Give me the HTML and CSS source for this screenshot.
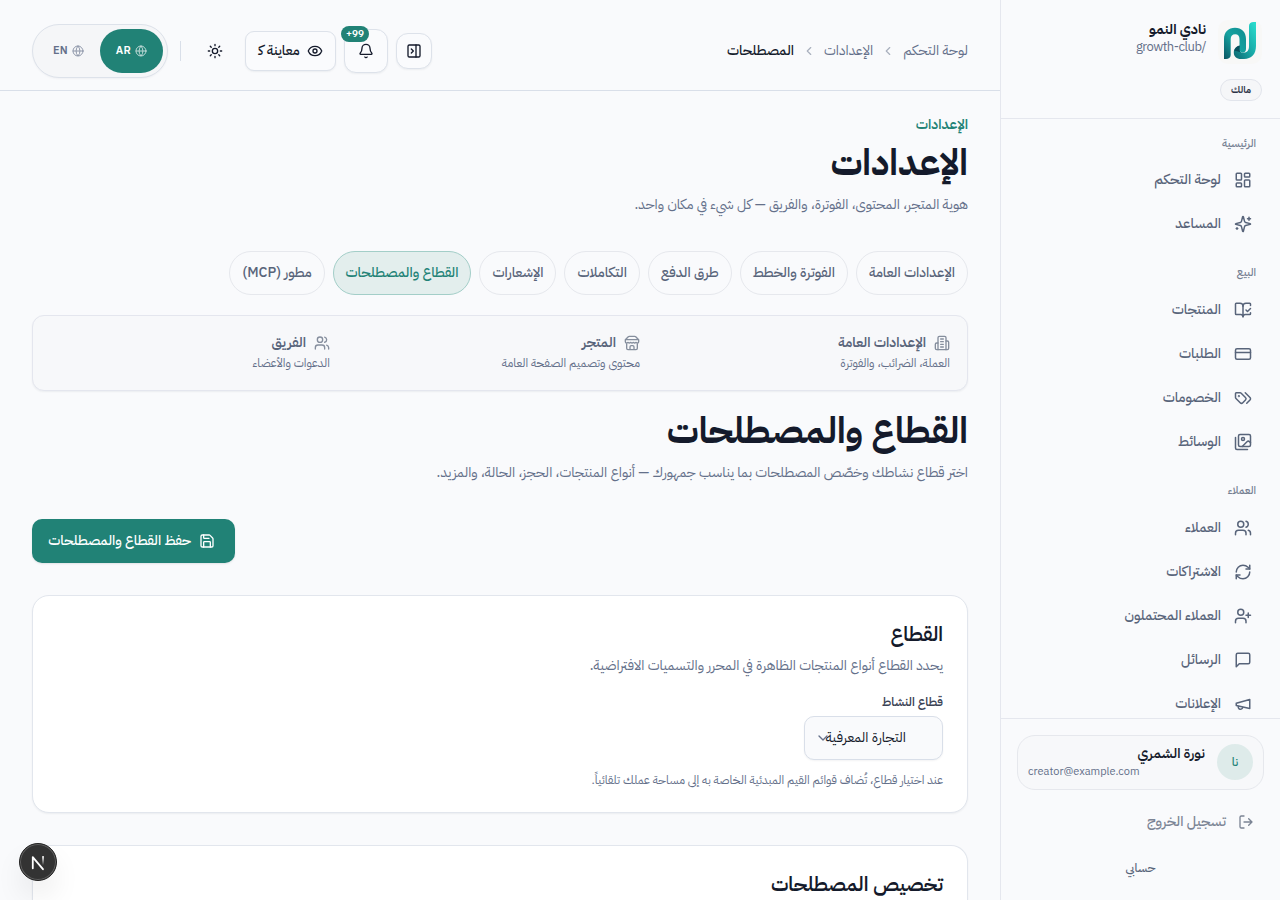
FILE: index.html
```html
<!DOCTYPE html>
<html lang="ar" dir="rtl">
<head>
  <meta charset="UTF-8">
  <meta name="viewport" content="width=device-width, initial-scale=1.0">
  <title>القطاع والمصطلحات</title>
  <link rel="stylesheet" href="styles.css">
</head>
<body>
  <aside class="sidebar">
    <div class="brand">
      <div class="brand-row">
        <svg class="logo" viewBox="0 0 44 44" fill="none">
          <defs>
            <linearGradient id="g1" x1="0" y1="1" x2="1" y2="0">
              <stop offset="0" stop-color="#0b5563"/><stop offset=".5" stop-color="#15a3a0"/><stop offset="1" stop-color="#128c90"/>
            </linearGradient>
            <linearGradient id="g2" x1="0" y1="1" x2="1" y2="0">
              <stop offset="0" stop-color="#0d6670"/><stop offset=".5" stop-color="#19aaa8"/><stop offset="1" stop-color="#2be0d0"/>
            </linearGradient>
          </defs>
          <rect width="44" height="44" rx="10" fill="#f8f8f7"/>
          <path d="M31 6C31 3.500 33 2 35.500 2H38V26C38 34 33.500 39 26 39H23C18.500 39 15.800 36.500 15.800 32.500S18.500 26 22 25.700V30C22 32 23 32.500 24.500 32.500H26C29.500 32.500 31 30 31 26Z" fill="url(#g2)"/>
          <path d="M6 39V19C6 12 10.500 7.800 17 7.800S28 12 28 19V29C28 31.500 26.500 32.500 24.500 32.500C22.500 32.500 21.500 31 21.500 29V19C21.500 16 20 14.300 17.200 14.300S12.700 16 12.700 19V35C12.700 37.500 10.500 39 8 39Z" fill="url(#g1)"/>
          <path d="M21.800 25.600C19 26 17 28 16.300 30.500L22.500 32.200C21.600 31.400 21.500 30 21.500 29Z" fill="#0a4f5c"/>
        </svg>
        <div class="brand-text">
          <b>نادي النمو</b>
          <span>/growth-club</span>
        </div>
      </div>
      <span class="role">مالك</span>
    </div>

    <nav class="nav">
      <h6>الرئيسية</h6>
      <a><svg viewBox="0 0 24 24"><rect x="3" y="3" width="7" height="9" rx="1"/><rect x="14" y="3" width="7" height="5" rx="1"/><rect x="14" y="12" width="7" height="9" rx="1"/><rect x="3" y="16" width="7" height="5" rx="1"/></svg><span>لوحة التحكم</span></a>
      <a><svg viewBox="0 0 24 24"><path d="M9.937 15.500A2 2 0 0 0 8.500 14.063l-6.135-1.582a.5.5 0 0 1 0-.962L8.500 9.936A2 2 0 0 0 9.937 8.500l1.582-6.135a.5.5 0 0 1 .963 0L14.063 8.500A2 2 0 0 0 15.500 9.937l6.135 1.581a.5.5 0 0 1 0 .964L15.500 14.063a2 2 0 0 0-1.437 1.437l-1.582 6.135a.5.5 0 0 1-.963 0z"/><path d="M20 3v4M22 5h-4M4 17v2M5 18H3"/></svg><span>المساعد</span></a>
      <h6>البيع</h6>
      <a><svg viewBox="0 0 24 24"><path d="M12 21V7M16 12l2 2 4-4"/><path d="M22 6V4a1 1 0 0 0-1-1h-5a4 4 0 0 0-4 4 4 4 0 0 0-4-4H3a1 1 0 0 0-1 1v13a1 1 0 0 0 1 1h6a3 3 0 0 1 3 3 3 3 0 0 1 3-3h6a1 1 0 0 0 1-1v-1.300"/></svg><span>المنتجات</span></a>
      <a><svg viewBox="0 0 24 24"><rect x="2" y="5" width="20" height="14" rx="2"/><path d="M2 10h20"/></svg><span>الطلبات</span></a>
      <a><svg viewBox="0 0 24 24"><path d="m15 5 6.300 6.300a2.400 2.400 0 0 1 0 3.400L17 19"/><path d="M9.586 5.586A2 2 0 0 0 8.172 5H3a1 1 0 0 0-1 1v5.172a2 2 0 0 0 .586 1.414L8.290 18.290a2.426 2.426 0 0 0 3.420 0l3.580-3.580a2.426 2.426 0 0 0 0-3.420z"/><circle cx="6.500" cy="9.500" r=".5"/></svg><span>الخصومات</span></a>
      <a><svg viewBox="0 0 24 24"><path d="M18 22H4a2 2 0 0 1-2-2V6"/><path d="m22 13-1.296-1.296a2.410 2.410 0 0 0-3.408 0L11 18"/><circle cx="12" cy="8" r="2"/><rect x="6" y="2" width="16" height="16" rx="2"/></svg><span>الوسائط</span></a>
      <h6>العملاء</h6>
      <a><svg viewBox="0 0 24 24"><path d="M16 21v-2a4 4 0 0 0-4-4H6a4 4 0 0 0-4 4v2"/><circle cx="9" cy="7" r="4"/><path d="M22 21v-2a4 4 0 0 0-3-3.870M16 3.130a4 4 0 0 1 0 7.750"/></svg><span>العملاء</span></a>
      <a><svg viewBox="0 0 24 24"><path d="M3 12a9 9 0 0 1 9-9 9.750 9.750 0 0 1 6.740 2.740L21 8"/><path d="M21 3v5h-5M21 12a9 9 0 0 1-9 9 9.750 9.750 0 0 1-6.740-2.740L3 16"/><path d="M8 16H3v5"/></svg><span>الاشتراكات</span></a>
      <a><svg viewBox="0 0 24 24"><path d="M16 21v-2a4 4 0 0 0-4-4H6a4 4 0 0 0-4 4v2"/><circle cx="9" cy="7" r="4"/><path d="M19 8v6M22 11h-6"/></svg><span>العملاء المحتملون</span></a>
      <a><svg viewBox="0 0 24 24"><path d="M21 15a2 2 0 0 1-2 2H7l-4 4V5a2 2 0 0 1 2-2h14a2 2 0 0 1 2 2z"/></svg><span>الرسائل</span></a>
      <a><svg viewBox="0 0 24 24"><path d="m3 11 18-5v12L3 14v-3z"/><path d="M11.600 16.800a3 3 0 1 1-5.800-1.600"/></svg><span>الإعلانات</span></a>
    </nav>

    <div class="side-foot">
      <div class="user">
        <span class="avatar">نا</span>
        <div class="user-text">
          <b>نورة الشمري</b>
          <span dir="ltr">creator@example.com</span>
        </div>
      </div>
      <a class="logout"><svg viewBox="0 0 24 24"><path d="m16 17 5-5-5-5M21 12H9M9 21H5a2 2 0 0 1-2-2V5a2 2 0 0 1 2-2h4"/></svg><span>تسجيل الخروج</span></a>
      <a class="account">حسابي</a>
    </div>
  </aside>

  <div class="page">
    <header class="topbar">
      <div class="crumbs">
        <a>لوحة التحكم</a>
        <svg viewBox="0 0 24 24"><path d="m15 18-6-6 6-6"/></svg>
        <a>الإعدادات</a>
        <svg viewBox="0 0 24 24"><path d="m15 18-6-6 6-6"/></svg>
        <b>المصطلحات</b>
      </div>
      <div class="tools">
        <button class="tool panel-btn"><svg viewBox="0 0 24 24"><rect x="3" y="3" width="18" height="18" rx="2"/><path d="M15 3v18M8 9l3 3-3 3"/></svg></button>
        <button class="tool bell-btn"><svg viewBox="0 0 24 24"><path d="M10.268 21a2 2 0 0 0 3.464 0"/><path d="M3.262 15.326A1 1 0 0 0 4 17h16a1 1 0 0 0 .740-1.673C19.410 13.956 18 12.499 18 8A6 6 0 0 0 6 8c0 4.499-1.411 5.956-2.738 7.326"/></svg><span class="count">99+</span></button>
        <button class="tool preview-btn"><svg viewBox="0 0 24 24"><path d="M2.062 12.348a1 1 0 0 1 0-.696 10.750 10.750 0 0 1 19.876 0 1 1 0 0 1 0 .696 10.750 10.750 0 0 1-19.876 0"/><circle cx="12" cy="12" r="3"/></svg><span>معاينة ك&zwj;</span></button>
        <button class="sun-btn"><svg viewBox="0 0 24 24"><circle cx="12" cy="12" r="4"/><path d="M12 2v2M12 20v2M4.930 4.930l1.410 1.410M17.660 17.660l1.410 1.410M2 12h2M20 12h2M6.340 17.660l-1.410 1.410M19.070 4.930l-1.410 1.410"/></svg></button>
        <i class="sep"></i>
        <div class="lang">
          <a class="on"><svg viewBox="0 0 24 24"><circle cx="12" cy="12" r="10"/><path d="M12 2a14.500 14.500 0 0 0 0 20 14.500 14.500 0 0 0 0-20M2 12h20"/></svg>AR</a>
          <a><svg viewBox="0 0 24 24"><circle cx="12" cy="12" r="10"/><path d="M12 2a14.500 14.500 0 0 0 0 20 14.500 14.500 0 0 0 0-20M2 12h20"/></svg>EN</a>
        </div>
      </div>
    </header>

    <main class="content">
      <p class="eyebrow">الإعدادات</p>
      <h1>الإعدادات</h1>
      <p class="lead">هوية المتجر، المحتوى، الفوترة، والفريق — كل شيء في مكان واحد.</p>

      <div class="tabs">
        <a>الإعدادات العامة</a>
        <a>الفوترة والخطط</a>
        <a>طرق الدفع</a>
        <a>التكاملات</a>
        <a>الإشعارات</a>
        <a class="active">القطاع والمصطلحات</a>
        <a>مطور (MCP)</a>
      </div>

      <div class="links">
        <div>
          <h4><svg viewBox="0 0 24 24"><path d="M6 22V4a2 2 0 0 1 2-2h8a2 2 0 0 1 2 2v18Z"/><path d="M6 12H4a2 2 0 0 0-2 2v6a2 2 0 0 0 2 2h2M18 9h2a2 2 0 0 1 2 2v9a2 2 0 0 1-2 2h-2M10 6h4M10 10h4M10 14h4M10 18h4"/></svg>الإعدادات العامة</h4>
          <p>العملة، الضرائب، والفوترة</p>
        </div>
        <div>
          <h4><svg viewBox="0 0 24 24"><path d="m2 7 4.410-4.410A2 2 0 0 1 7.830 2h8.340a2 2 0 0 1 1.420.59L22 7M4 12v8a2 2 0 0 0 2 2h12a2 2 0 0 0 2-2v-8M15 22v-4a2 2 0 0 0-2-2h-2a2 2 0 0 0-2 2v4M2 7h20M22 7v3a2 2 0 0 1-2 2 2.700 2.700 0 0 1-1.590-.63.7.7 0 0 0-.82 0A2.700 2.700 0 0 1 16 12a2.700 2.700 0 0 1-1.590-.63.7.7 0 0 0-.82 0A2.700 2.700 0 0 1 12 12a2.700 2.700 0 0 1-1.590-.63.7.7 0 0 0-.82 0A2.700 2.700 0 0 1 8 12a2.700 2.700 0 0 1-1.590-.63.7.7 0 0 0-.82 0A2.700 2.700 0 0 1 4 12a2 2 0 0 1-2-2V7"/></svg>المتجر</h4>
          <p>محتوى وتصميم الصفحة العامة</p>
        </div>
        <div>
          <h4><svg viewBox="0 0 24 24"><path d="M16 21v-2a4 4 0 0 0-4-4H6a4 4 0 0 0-4 4v2"/><circle cx="9" cy="7" r="4"/><path d="M22 21v-2a4 4 0 0 0-3-3.870M16 3.130a4 4 0 0 1 0 7.750"/></svg>الفريق</h4>
          <p>الدعوات والأعضاء</p>
        </div>
      </div>

      <h1 class="title-sector">القطاع والمصطلحات</h1>
      <p class="lead">اختر قطاع نشاطك وخصّص المصطلحات بما يناسب جمهورك — أنواع المنتجات، الحجز، الحالة، والمزيد.</p>

      <div class="actions">
        <button class="save"><svg viewBox="0 0 24 24"><path d="M15.200 3a2 2 0 0 1 1.400.6l3.800 3.800a2 2 0 0 1 .6 1.400V19a2 2 0 0 1-2 2H5a2 2 0 0 1-2-2V5a2 2 0 0 1 2-2z"/><path d="M17 21v-7a1 1 0 0 0-1-1H8a1 1 0 0 0-1 1v7M7 3v4a1 1 0 0 0 1 1h7"/></svg><span>حفظ القطاع والمصطلحات</span></button>
      </div>

      <section class="card">
        <h2 class="card-title">القطاع</h2>
        <p class="card-desc">يحدد القطاع أنواع المنتجات الظاهرة في المحرر والتسميات الافتراضية.</p>
        <label class="field-label">قطاع النشاط</label>
        <div class="select"><span>التجارة المعرفية</span><svg viewBox="0 0 24 24"><path d="m6 9 6 6 6-6"/></svg></div>
        <p class="help">عند اختيار قطاع، تُضاف قوائم القيم المبدئية الخاصة به إلى مساحة عملك تلقائياً.</p>
      </section>

      <section class="card last">
        <h2 class="card-title">تخصيص المصطلحات</h2>
      </section>
    </main>
  </div>

  <div class="dev-badge">
    <svg viewBox="0 0 40 40" fill="none">
      <defs><linearGradient id="g3" x1="0" y1="0" x2="0" y2="1"><stop offset="0" stop-color="#fff"/><stop offset="1" stop-color="#fff" stop-opacity="0"/></linearGradient></defs>
      <path d="M14.200 27V14.500L25.500 28" stroke="#fff" stroke-width="2"/>
      <rect x="24.600" y="13.500" width="2" height="10" fill="url(#g3)"/>
    </svg>
  </div>
</body>
</html>
```

FILE: styles.css
```css
* {
  box-sizing: border-box;
  margin: 0;
  padding: 0;
}
body {
  display: flex;
  height: 900px;
  overflow: hidden;
  background: #f9fafc;
  color: #141a2b;
  font-family: "IBM Plex Sans Arabic", "Noto Sans Arabic", Roboto, "DejaVu Sans", sans-serif;
  font-size: 14px;
  white-space: nowrap;
}
svg {
  width: 16px;
  height: 16px;
  flex: none;
  fill: none;
  stroke: currentColor;
  stroke-width: 2;
  stroke-linecap: round;
  stroke-linejoin: round;
}
button {
  font: inherit;
  color: inherit;
  background: none;
  border: none;
}

/* sidebar */
.sidebar {
  width: 280px;
  flex: none;
  display: flex;
  flex-direction: column;
  border-left: 1px solid #e5e7ee;
}
.brand {
  height: 119px;
  padding: 20px 18px 0;
  border-bottom: 1px solid #e5e7ee;
}
.brand-row {
  display: flex;
  gap: 12px;
}
.logo {
  width: 44px;
  height: 44px;
  stroke: none;
}
.brand-text b {
  display: block;
  height: 19px;
  line-height: 19px;
  font-size: 14px;
}
.brand-text span {
  display: block;
  line-height: 16px;
  font-size: 13px;
  letter-spacing: -.5px;
  color: #64708a;
}
.role {
  display: flex;
  align-items: center;
  justify-content: center;
  width: 42px;
  height: 22px;
  margin-top: 15px;
  padding-bottom: 1px;
  border: 1px solid #e2e5ec;
  border-radius: 11px;
  background: #f5f6f8;
  font-size: 10px;
  font-weight: 600;
  color: #2b3245;
}
.nav {
  flex: 1;
  min-height: 0;
  overflow: hidden;
  padding: 8px 16px 0;
}
.nav h6 {
  height: 31px;
  line-height: 31px;
  padding-right: 8px;
  font-size: 11px;
  font-weight: 500;
  color: #747e91;
}
.nav h6:first-child {
  line-height: 33px;
}
.nav a + h6 {
  margin-top: 11px;
}
.nav a {
  display: flex;
  align-items: center;
  gap: 13px;
  height: 44px;
  padding-right: 12px;
  font-weight: 500;
  color: #58647a;
}
.nav a span,
.logout span,
.save span,
.select span {
  padding-bottom: 2px;
}
.nav svg {
  width: 18px;
  height: 18px;
}
.side-foot {
  height: 182px;
  padding: 16px 16px 0;
  border-top: 1px solid #e5e7ee;
}
.user {
  display: flex;
  align-items: center;
  gap: 12px;
  height: 55px;
  padding: 0 10px;
  border: 1px solid #e6e8ed;
  border-radius: 18px;
  background: #f7f8fa;
}
.avatar {
  width: 36px;
  height: 36px;
  flex: none;
  margin-bottom: 1px;
  border-radius: 50%;
  background: #deebea;
  color: #218276;
  font-size: 12px;
  font-weight: 500;
  line-height: 36px;
  text-align: center;
}
.user-text {
  flex: 1;
}
.user-text b,
.user-text span {
  display: block;
  line-height: 18px;
}
.user-text b {
  font-weight: 600;
}
.user-text span {
  font-size: 11px;
  line-height: 17px;
  color: #64708a;
}
.logout {
  display: flex;
  align-items: center;
  gap: 12px;
  height: 44px;
  margin-top: 10px;
  padding-right: 10px;
  font-weight: 500;
  color: #7b8494;
}
.account {
  display: block;
  height: 44px;
  line-height: 44px;
  margin-top: 2px;
  text-align: center;
  font-size: 12px;
  font-weight: 500;
  color: #58647a;
}

/* top bar */
.page {
  flex: 1;
  min-width: 0;
}
.topbar {
  display: flex;
  align-items: center;
  justify-content: space-between;
  height: 91px;
  padding: 11px 32px 0;
  border-bottom: 1px solid #d9dfe9;
}
.crumbs {
  display: flex;
  align-items: center;
  gap: 8px;
  height: 44px;
  margin-top: -1px;
  color: #64708a;
}
.crumbs b {
  font-weight: 500;
  color: #141a2b;
}
.crumbs svg {
  width: 14px;
  height: 14px;
  margin-top: 1px;
  color: #a9b0be;
}
.tools {
  display: flex;
  align-items: center;
  gap: 8px;
}
.tool {
  position: relative;
  display: flex;
  align-items: center;
  justify-content: center;
  border: 1px solid #dde2ea;
  border-radius: 12px;
  background: #fafbfd;
  box-shadow: 0 1px 2px rgba(20, 26, 43, .06);
}
.panel-btn {
  width: 36px;
  height: 36px;
}
.bell-btn {
  width: 44px;
  height: 44px;
}
.preview-btn {
  width: 91px;
  height: 40px;
  gap: 7px;
  border-radius: 9px;
  font-weight: 500;
}
.count {
  position: absolute;
  left: -4px;
  top: -4px;
  width: 28px;
  height: 16px;
  border-radius: 8px;
  background: #218276;
  color: #fff;
  font-size: 10px;
  font-weight: 600;
  line-height: 15px;
}
.sun-btn {
  width: 44px;
  height: 44px;
  line-height: 0;
}
.sep {
  width: 1px;
  height: 20px;
  margin: 0 4px;
  background: #d9dfe9;
}
.lang {
  display: flex;
  width: 136px;
  height: 54px;
  padding: 4px;
  border: 1px solid #dde2ea;
  border-radius: 27px;
  background: #f5f6f8;
  box-shadow: 0 1px 2px rgba(20, 26, 43, .04);
}
.lang a {
  display: flex;
  flex: 1;
  align-items: center;
  justify-content: center;
  gap: 4px;
  border-radius: 22px;
  font-size: 11px;
  font-weight: 600;
  letter-spacing: .3px;
  color: #64708a;
}
.lang svg {
  width: 12px;
  height: 12px;
  opacity: .7;
}
.lang .on {
  background: #218276;
  color: #fff;
}

/* content */
.content {
  padding: 22px 32px 0;
}
.eyebrow {
  height: 24px;
  line-height: 24px;
  font-weight: 600;
  color: #218276;
}
.content h1 {
  height: 52px;
  line-height: 52px;
  font-size: 36px;
  font-weight: 700;
}
.lead {
  height: 32px;
  line-height: 32px;
  color: #64708a;
}
.tabs {
  display: flex;
  gap: 8px;
  margin-top: 30px;
}
.tabs a {
  height: 44px;
  padding: 0 12px;
  line-height: 42px;
  border: 1px solid #e6e8ed;
  border-radius: 22px;
  font-weight: 500;
  color: #58647a;
}
.tabs .active {
  border-color: #a3cec8;
  background: #e3eeed;
  color: #218276;
}
.links {
  display: grid;
  grid-template-columns: repeat(3, 1fr);
  gap: 30px;
  height: 76px;
  margin-top: 20px;
  padding: 16px 17px;
  border: 1px solid #e4e6ee;
  border-radius: 12px;
  background: #f7f8fa;
  box-shadow: 0 1px 2px rgba(20, 26, 43, .06);
  color: #64708a;
}
.links h4 {
  display: flex;
  align-items: center;
  gap: 8px;
  height: 21px;
  font-size: 14px;
  font-weight: 600;
  color: #58647a;
}
.links svg {
  color: #858e9d;
}
.links p {
  line-height: 20px;
  font-size: 12px;
}
.content .title-sector {
  margin-top: 14px;
}
.actions {
  display: flex;
  justify-content: flex-end;
  margin-top: 30px;
}
.save {
  display: flex;
  align-items: center;
  gap: 8px;
  width: 203px;
  height: 44px;
  padding: 0 20px 0 16px;
  border-radius: 10px;
  background: #218276;
  color: #fff;
  font-weight: 500;
  box-shadow: 0 1px 2px rgba(20, 26, 43, .1);
}
.card {
  height: 218px;
  margin-top: 32px;
  padding: 22px 24px;
  border: 1px solid #e2e6ed;
  border-radius: 17px;
  background: #fff;
  box-shadow: 0 1px 2px rgba(20, 26, 43, .06);
}
.card.last {
  height: 55px;
  border-bottom: none;
  border-radius: 17px 17px 0 0;
  padding-bottom: 0;
}
.card-title {
  height: 32px;
  line-height: 32px;
  font-size: 20px;
  font-weight: 600;
}
.card-desc {
  height: 30px;
  line-height: 32px;
  color: #64708a;
}
.field-label {
  display: block;
  height: 26px;
  margin-top: 9px;
  line-height: 26px;
  font-size: 12px;
  font-weight: 600;
  color: #3a4254;
}
.select {
  display: flex;
  align-items: center;
  width: 139px;
  height: 44px;
  margin-top: 1px;
  padding: 0 36px 0 10px;
  border: 1px solid #d9dfe9;
  border-radius: 10px;
  background: #f9fafc;
  box-shadow: 0 1px 2px rgba(20, 26, 43, .05);
}
.select span {
  width: 80px;
}
.select svg {
  margin-right: -5px;
  color: #64708a;
}
.help {
  height: 26px;
  margin-top: 7px;
  line-height: 26px;
  font-size: 12px;
  color: #64708a;
}

/* floating dev tools button */
.dev-badge {
  position: fixed;
  left: 19px;
  bottom: 19px;
  width: 38px;
  height: 38px;
  border-radius: 50%;
  background: #333;
  border: 1px solid #222;
  box-shadow: inset 0 0 0 1px #606060, 0 16px 32px -8px rgba(0, 0, 0, .2);
}
.dev-badge svg {
  display: block;
  width: 36px;
  height: 36px;
  stroke: none;
}
```
